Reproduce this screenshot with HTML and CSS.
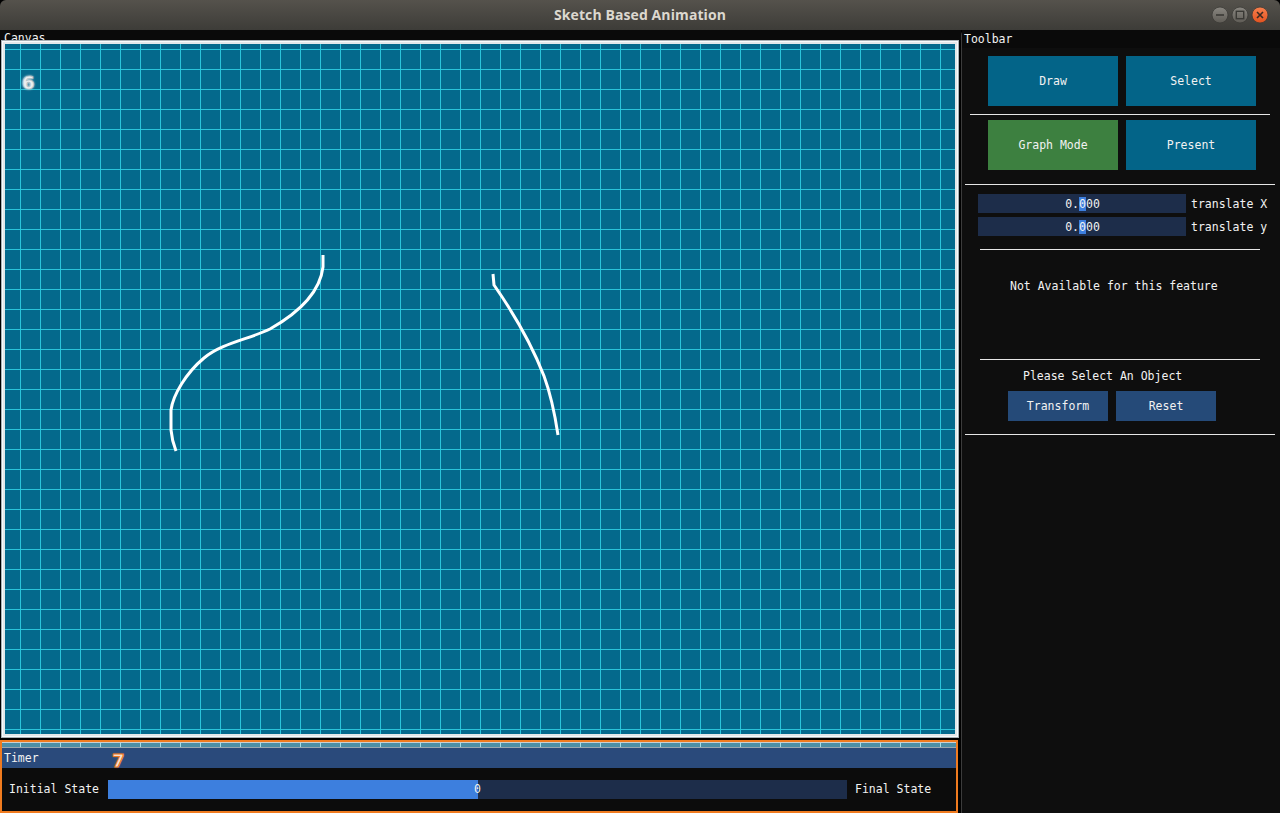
FILE: index.html
```html
<!DOCTYPE html>
<html>
<head>
<meta charset="utf-8">
<title>Sketch Based Animation</title>
<link rel="stylesheet" href="styles.css">
</head>
<body>
<div class="app">
  <header class="titlebar">
    <div class="title">Sketch Based Animation</div>
    <svg class="winbtns" width="64" height="20" viewBox="0 0 64 20">
      <defs>
        <linearGradient id="gbtn" x1="0" y1="0" x2="0" y2="1">
          <stop offset="0" stop-color="#8a8781"/>
          <stop offset="1" stop-color="#5e5b55"/>
        </linearGradient>
        <linearGradient id="cbtn" x1="0" y1="0" x2="0" y2="1">
          <stop offset="0" stop-color="#f7804e"/>
          <stop offset="1" stop-color="#e2521f"/>
        </linearGradient>
      </defs>
      <circle cx="9" cy="10" r="8" fill="url(#gbtn)" stroke="#3b3a36" stroke-width="0.8"/>
      <line x1="5" y1="10" x2="13" y2="10" stroke="#3a3935" stroke-width="1.6"/>
      <circle cx="29" cy="10" r="8" fill="url(#gbtn)" stroke="#3b3a36" stroke-width="0.8"/>
      <rect x="25.3" y="6.3" width="7.4" height="7.4" fill="none" stroke="#3a3935" stroke-width="1.4"/>
      <circle cx="49" cy="10" r="8" fill="url(#cbtn)" stroke="#3b3a36" stroke-width="0.8"/>
      <path d="M46 7 L52 13 M52 7 L46 13" stroke="#3a2a22" stroke-width="1.6"/>
    </svg>
  </header>
  <main class="workspace">
    <section class="left">
      <div class="canvas-label">Canvas</div>
      <div class="canvas-frame">
        <div class="grid">
          <span class="marker marker-6">6</span>
          <svg class="strokes" width="950" height="690" viewBox="5 44 950 690">
            <path fill="none" stroke="#ffffff" stroke-width="3" stroke-linejoin="round"
              d="M323,255 L323,267 C320,292 300,312 270,329 C250,339 222,343 204,358 C186,373 173,395 171,410 L171,430 Q172,441 176,451"/>
            <path fill="none" stroke="#ffffff" stroke-width="3" stroke-linejoin="round"
              d="M493,274 L494,285 C510,308 530,340 544,376 C551,395 555,415 558,435"/>
          </svg>
        </div>
      </div>
      <div class="timer">
        <div class="timer-strip"></div>
        <div class="timer-title">Timer<span class="marker marker-7">7</span></div>
        <div class="timer-body">
          <span class="tlabel">Initial State</span>
          <div class="progress">
            <div class="progress-fill" style="width: 50%"></div>
            <span class="progress-val">0</span>
          </div>
          <span class="tlabel">Final State</span>
        </div>
      </div>
    </section>
    <aside class="toolbar">
      <div class="tb-title">Toolbar</div>
      <div class="btn-row row1">
        <div class="btn btn-teal">Draw</div>
        <div class="btn btn-teal">Select</div>
      </div>
      <div class="sep sep-a"></div>
      <div class="btn-row row2">
        <div class="btn btn-green">Graph Mode</div>
        <div class="btn btn-teal">Present</div>
      </div>
      <div class="sep sep-b"></div>
      <div class="drag-rows">
        <div class="drag-row">
          <div class="drag"><span>0.</span><span class="cur">0</span><span>00</span></div>
          <span class="drag-label">translate X</span>
        </div>
        <div class="drag-row">
          <div class="drag"><span>0.</span><span class="cur">0</span><span>00</span></div>
          <span class="drag-label">translate y</span>
        </div>
      </div>
      <div class="sep sep-c"></div>
      <div class="note">Not Available for this feature</div>
      <div class="sep sep-c sep-d"></div>
      <div class="prompt">Please Select An Object</div>
      <div class="small-row">
        <div class="sbtn">Transform</div>
        <div class="sbtn">Reset</div>
      </div>
      <div class="sep sep-b sep-e"></div>
    </aside>
  </main>
</div>
</body>
</html>
```

FILE: styles.css
```css
* { box-sizing: border-box; }

html, body {
  margin: 0;
  padding: 0;
  background: #000;
}

body {
  width: 1280px;
  height: 813px;
  overflow: hidden;
  font-family: "DejaVu Sans Mono", "Liberation Mono", monospace;
  font-size: 11.5px;
  color: #f2f2f2;
}

.app {
  display: flex;
  flex-direction: column;
  height: 813px;
}

/* ---------- title bar ---------- */
.titlebar {
  position: relative;
  height: 30px;
  flex: none;
  display: flex;
  align-items: center;
  justify-content: center;
  background: linear-gradient(#55524c, #3d3c38);
  border-radius: 6px 6px 0 0;
}

.title {
  font-family: "Open Sans", "DejaVu Sans", sans-serif;
  font-weight: 700;
  font-size: 14px;
  color: #dcd8cf;
  letter-spacing: 0.1px;
  margin-top: -2px;
}

.winbtns {
  position: absolute;
  right: 5px;
  top: 5px;
}

/* ---------- workspace ---------- */
.workspace {
  flex: 1;
  display: flex;
  background: #000;
}

.left {
  width: 961px;
  flex: none;
  display: flex;
  flex-direction: column;
}

.canvas-label {
  height: 10px;
  overflow: hidden;
  padding: 2px 0 0 4px;
  line-height: 13px;
  background: #0a0a0a;
}

.canvas-frame {
  margin-left: 1px;
  width: 958px;
  height: 698px;
  border: 1px solid #a7b0b5;
  padding: 3px;
  background: #e3e8ea;
  box-shadow: inset 0 0 0 1px #f8fafb;
}

.grid {
  position: relative;
  width: 100%;
  height: 100%;
  background-color: #04698c;
  background-image:
    linear-gradient(90deg, #2ac3da 0 1px, transparent 1px),
    linear-gradient(180deg, #2ac3da 0 1px, transparent 1px);
  background-size: 20px 20px;
  background-position: 15px 5px;
  overflow: hidden;
}

.strokes {
  position: absolute;
  left: 0;
  top: 0;
}

.marker {
  position: absolute;
  font-family: "DejaVu Sans", "Open Sans", sans-serif;
  font-weight: 700;
  font-size: 18px;
  line-height: 20px;
}

.marker-6 {
  left: 17px;
  top: 29px;
  color: #e9eef0;
  text-shadow: 0 0 2px #ffffff, 0 0 3px #9fb4bd;
  -webkit-text-stroke: 0.6px #a9b9c0;
}

.marker-7 {
  left: 110px;
  top: 3px;
  color: #f6e2d2;
  -webkit-text-stroke: 1px #ef7a22;
  text-shadow: 0 0 2px #f08a38;
}

/* ---------- timer ---------- */
.timer {
  margin-top: 2px;
  width: 958px;
  height: 73px;
  border: 2px solid #f07b1f;
  display: flex;
  flex-direction: column;
  background: #0c0c0c;
}

.timer-strip {
  height: 6px;
  border-top: 1px solid #c9d0d4;
  background-color: #4d8fa6;
  background-image: linear-gradient(90deg, #a6dde6 0 1px, transparent 1px);
  background-size: 20px 6px;
  background-position: 18px 0;
  border-bottom: 1px solid #9aa6ae;
}

.timer-title {
  position: relative;
  height: 20px;
  background: #2a4a7b;
  padding-left: 2px;
  line-height: 20px;
}

.timer-body {
  flex: 1;
  display: flex;
  align-items: flex-start;
  padding: 12px 0 0 7px;
}

.tlabel {
  line-height: 19px;
  white-space: nowrap;
}

.progress {
  position: relative;
  width: 739px;
  height: 19px;
  margin: 0 8px 0 9px;
  background: #1d2d4a;
}

.progress-fill {
  height: 100%;
  background: #3d7fde;
}

.progress-val {
  position: absolute;
  left: 0;
  right: 0;
  top: 0;
  text-align: center;
  line-height: 19px;
}

/* ---------- toolbar ---------- */
.toolbar {
  width: 319px;
  flex: none;
  background: #0e0e0e;
  border-left: 1px solid #3b3b3b;
  border-radius: 5px 5px 0 0;
  display: flex;
  flex-direction: column;
}

.tb-title {
  height: 18px;
  padding: 3px 0 0 2px;
  line-height: 13px;
  background: #0a0a0a;
}

.btn-row {
  display: flex;
  gap: 8px;
  margin-left: 26px;
}

.row1 { margin-top: 8px; }
.row2 { margin-top: 5px; }

.btn {
  width: 130px;
  height: 50px;
  display: flex;
  align-items: center;
  justify-content: center;
}

.btn-teal { background: #036488; }
.btn-green { background: #3d8040; }

.sep {
  height: 1px;
  background: #e6e6e6;
}

.sep-a { margin: 8px 10px 0 8px; }
.sep-b { margin: 14px 5px 0 3px; }
.sep-c { margin: 13px 20px 0 18px; }
.sep-d { margin-top: 0; }
.sep-e { margin-top: 13px; }

.drag-rows {
  display: flex;
  flex-direction: column;
  gap: 4px;
  margin: 9px 0 0 16px;
}

.drag-row {
  display: flex;
  align-items: center;
  gap: 5px;
}

.drag {
  width: 208px;
  height: 19px;
  background: #1d2d4a;
  display: flex;
  justify-content: center;
  align-items: center;
  padding-left: 1px;
}

.cur {
  background: #3d7fde;
}

.drag-label {
  white-space: nowrap;
}

.note {
  margin: 30px 0 0 48px;
  line-height: 13px;
  height: 79px;
}

.prompt {
  margin: 10px 0 0 61px;
  line-height: 13px;
}

.small-row {
  display: flex;
  gap: 8px;
  margin: 8px 0 0 46px;
}

.sbtn {
  width: 100px;
  height: 30px;
  background: #254a78;
  display: flex;
  align-items: center;
  justify-content: center;
}
```
